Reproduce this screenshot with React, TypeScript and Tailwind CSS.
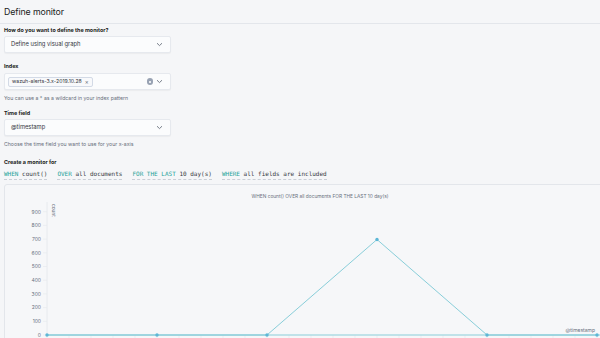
import React from "react";

const yTicks = [900, 800, 700, 600, 500, 400, 300, 200, 100, 0];
const points: [number, number][] = [
  [47, 335],
  [157, 335],
  [267, 335],
  [377, 239.5],
  [487, 335],
  [597, 335],
];

function Chevron() {
  return (
    <svg width="7" height="5" viewBox="0 0 7 5" className="shrink-0">
      <path d="M1 1.2 L3.5 3.6 L6 1.2" fill="none" stroke="#69707d" strokeWidth="0.9" />
    </svg>
  );
}

function Field({ children }: { children: React.ReactNode }) {
  return (
    <div className="w-[167px] h-[17px] bg-[#fbfcfd] border border-[#e6e9ee] rounded-[2px] shadow-[0_1px_1px_rgba(0,0,0,0.04)] flex items-center pl-[6px] pr-[7px]">
      {children}
    </div>
  );
}

function Label({ text, mt }: { text: string; mt: string }) {
  return <div className={`${mt} h-[8px] leading-[8px] text-[5.4px] font-bold text-[#1a1c21]`}>{text}</div>;
}

function Help({ text }: { text: string }) {
  return <div className="mt-[4px] h-[8px] leading-[8px] text-[5.2px] text-[#69707d]">{text}</div>;
}

function Clause({ kw, rest }: { kw: string; rest: string }) {
  return (
    <span className="border-b border-dashed border-[#c9ced6] pb-[1px] whitespace-pre">
      <span className="text-[#25a398]">{kw}</span>
      <span className="text-[#343741]"> {rest}</span>
    </span>
  );
}

function Chart() {
  const line = points.map((p) => p.join(",")).join(" ");
  const xt: number[] = [];
  for (let x = 47; x <= 600; x += 22) xt.push(x);
  return (
    <svg width="600" height="160" viewBox="5 185 600 160" className="block">
      <text x="320" y="198" fontSize="4.8" textAnchor="middle" fill="#69707d" fontFamily="Inter">
        WHEN count() OVER all documents FOR THE LAST 10 day(s)
      </text>
      <line x1="47" y1="202" x2="47" y2="335" stroke="#e4e7ec" strokeWidth="0.8" />
      {yTicks.map((v, i) => {
        const y = 211.7 + i * 13.7;
        return (
          <g key={v}>
            <line x1="43" y1={y} x2="47" y2={y} stroke="#e4e7ec" strokeWidth="0.6" />
            <text x="41" y={y + 1.8} fontSize="5" textAnchor="end" fill="#69707d" fontFamily="Inter">
              {v}
            </text>
          </g>
        );
      })}
      {xt.map((x) => (
        <line key={x} x1={x} y1="335" x2={x} y2="340" stroke="#e4e7ec" strokeWidth="0.6" />
      ))}
      <text
        x="52"
        y="204"
        fontSize="4.8"
        fill="#69707d"
        fontFamily="Inter"
        transform="rotate(90 52 204)"
      >
        count
      </text>
      <line x1="47" y1="335" x2="600" y2="335" stroke="#aedbe3" strokeWidth="1.6" />
      <polyline points={line} fill="none" stroke="#6cc3d0" strokeWidth="0.8" />
      {points.map(([x, y]) => (
        <circle key={x} cx={x} cy={y} r="1.7" fill="#5db7d6" />
      ))}
      <text x="595" y="332" fontSize="5" textAnchor="end" fill="#69707d" fontFamily="Inter">
        @timestamp
      </text>
    </svg>
  );
}

export default function App() {
  return (
    <div className="w-[600px] h-[338px] overflow-hidden bg-[#f5f6f8] font-['Inter',sans-serif]">
      <div className="h-[24px] border-b border-[#e3e6eb] px-[4px] flex items-center">
        <h1 className="text-[8.8px] text-[#1a1c21] tracking-[-0.1px]">Define monitor</h1>
      </div>

      <div className="px-[4px] flex flex-col">
        <Label text="How do you want to define the monitor?" mt="mt-[2px]" />
        <div className="mt-[2px]">
          <Field>
            <span className="flex-1 text-[5.8px] text-[#343741]">Define using visual graph</span>
            <Chevron />
          </Field>
        </div>

        <Label text="Index" mt="mt-[9px]" />
        <div className="mt-[3px]">
          <Field>
            <div className="flex-1 flex items-center -ml-[3px]">
              <span className="h-[10px] border border-[#d3dae6] bg-[#f8f9fb] rounded-[2px] flex items-center px-[3px] gap-[3px] text-[5.2px] text-[#343741]">
                wazuh-alerts-3.x-2019.10.28
                <span className="text-[6px] leading-none text-[#69707d]">×</span>
              </span>
            </div>
            <span className="w-[6.5px] h-[6.5px] rounded-full bg-[#98a2b3] flex items-center justify-center mr-[3px]">
              <svg width="4" height="4" viewBox="0 0 4 4">
                <path d="M1 1 L3 3 M3 1 L1 3" stroke="#fbfcfd" strokeWidth="0.8" />
              </svg>
            </span>
            <Chevron />
          </Field>
        </div>
        <Help text="You can use a * as a wildcard in your index pattern" />

        <Label text="Time field" mt="mt-[7px]" />
        <div className="mt-[2px]">
          <Field>
            <span className="flex-1 text-[5.8px] text-[#343741]">@timestamp</span>
            <Chevron />
          </Field>
        </div>
        <Help text="Choose the time field you want to use for your x-axis" />

        <Label text="Create a monitor for" mt="mt-[10px]" />
        <div className="mt-[3px] h-[11px] flex items-start gap-[10px] font-['DejaVu_Sans_Mono',monospace] text-[6px] leading-[9px]">
          <Clause kw="WHEN" rest="count()" />
          <Clause kw="OVER" rest="all documents" />
          <Clause kw="FOR THE LAST" rest="10 day(s)" />
          <Clause kw="WHERE" rest="all fields are included" />
        </div>

        <div className="mt-[4px] w-[600px] h-[160px] border border-[#e3e6eb] rounded-[3px] bg-[#f6f7f9] overflow-hidden">
          <Chart />
        </div>
      </div>
    </div>
  );
}
